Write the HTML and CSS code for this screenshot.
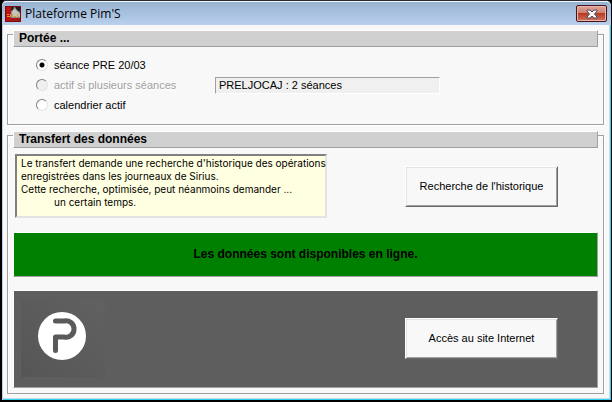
FILE: index.html
```html
<!DOCTYPE html>
<html lang="fr">
<head>
<meta charset="utf-8">
<title>Plateforme Pim'S</title>
<link rel="stylesheet" href="styles.css">
</head>
<body>
<div class="window">
  <header class="titlebar">
    <svg class="app-icon" viewBox="0 0 16 16" aria-hidden="true">
      <rect width="16" height="16" fill="#7c0a10"/>
      <rect x="1" y="1" width="5" height="14" fill="#c01010"/>
      <rect x="6" y="1" width="9" height="11" fill="#8c8c88"/>
      <path d="M6 1h3l-1 3-2 1z" fill="#222"/>
      <path d="M8 4l2-1 2 2 3 3v3H7V6z" fill="#c4c4c0"/>
      <path d="M10 1h5v5l-3-2z" fill="#1c1c1c"/>
      <path d="M6 12h9v3H6z" fill="#a01818"/>
      <path d="M2 8.500h2M2 10.500h3M5.500 8v3M7.500 8v3M9 10.500h2M12.500 8v2.500h2" stroke="#d89a28" fill="none"/>
    </svg>
    <h1 class="title">Plateforme Pim'S</h1>
    <button class="close" type="button" aria-label="Fermer">
      <svg viewBox="0 0 12 10" aria-hidden="true">
        <path d="M1 1h3l2 2 2-2h3v1L8.500 5 11 8v1H8L6 7 4 9H1V8l2.500-3L1 2z" fill="#f6f6f6" stroke="#4a5060" stroke-width="1"/>
      </svg>
    </button>
  </header>
  <main class="content">
    <section class="group">
      <h2 class="group-title">Portée ...</h2>
      <div class="options">
        <label class="option"><input type="radio" name="portee" checked>séance PRE 20/03</label>
        <label class="option off"><input type="radio" name="portee" disabled>actif si plusieurs séances</label>
        <input class="field" type="text" value="PRELJOCAJ : 2 séances" aria-label="Séances" readonly>
        <label class="option"><input type="radio" name="portee">calendrier actif</label>
      </div>
    </section>
    <section class="group transfer">
      <h2 class="group-title">Transfert des données</h2>
      <div class="row">
        <div class="note">
          <p>Le transfert demande une recherche d'historique des opérations</p>
          <p>enregistrées dans les journeaux de Sirius.</p>
          <p>Cette recherche, optimisée, peut néanmoins demander ...</p>
          <p class="indent">un certain temps.</p>
        </div>
        <button class="push" type="button">Recherche de l'historique</button>
      </div>
      <div class="status">Les données sont disponibles en ligne.</div>
      <div class="row banner">
        <svg class="logo" viewBox="0 0 84 78" role="img" aria-label="Pim'S">
          <defs>
            <linearGradient id="shade" x1="0" y1="1" x2="1" y2="0">
              <stop offset="0" stop-color="#565656"/>
              <stop offset="1" stop-color="#616161"/>
            </linearGradient>
          </defs>
          <rect width="84" height="78" fill="url(#shade)"/>
          <circle cx="41" cy="37" r="24" fill="#fff"/>
          <path d="M34.500 22H43a8 8 0 0 1 10 8a8 8 0 0 1-10 8H34.500V51.500" fill="none" stroke="#5a5a5a" stroke-width="5" stroke-linecap="round" stroke-linejoin="round"/>
        </svg>
        <button class="push" type="button">Accès au site Internet</button>
      </div>
    </section>
  </main>
</div>
</body>
</html>
```
FILE: styles.css
```css
* { box-sizing: border-box; }
body {
  margin: 0;
  background: #000;
  color: #000;
  font: 11px/13px "Liberation Sans", Arial, sans-serif;
}
h1, h2, p { margin: 0; }
button, input { font: inherit; color: inherit; }

.window {
  display: flex;
  flex-direction: column;
  min-height: 100vh;
  border: solid;
  border-width: 1px 1px 2px 2px;
  border-color: #2a2a35 #000 #000 #000;
  border-radius: 6px 6px 0 0;
  background: #f8f8f8;
  box-shadow: inset 1px 0 #b9d1ea, inset -1px 0 #2fd0ee, inset 0 -1px #2fd0ee, inset -2px -2px #c4dcea;
}
.titlebar {
  display: flex;
  align-items: center;
  height: 24px;
  padding: 0 4px 0 3px;
  border-top: 1px solid #f4f8fc;
  border-radius: 5px 5px 0 0;
  background: linear-gradient(#98b3d1, #b9d0ec);
}
.app-icon { width: 16px; height: 16px; }
.title {
  flex: 1;
  padding-left: 4px;
  font: 12px/16px "Open Sans", "Noto Sans", sans-serif;
}
.close {
  display: grid;
  place-items: center;
  width: 31px;
  height: 17px;
  padding: 0;
  border: 1px solid #43141c;
  border-radius: 2px;
  background: linear-gradient(#e0a498, #d08070 45%, #b83a22 50%, #cc7560);
  box-shadow: inset 0 0 0 1px #e9b5aa;
}
.close svg { width: 12px; height: 10px; }

.content { padding: 9px 7px 4px 5px; }
.group {
  padding: 0 5px;
  border: 1px solid #a0a0a0;
  box-shadow: 1px 1px #fff, inset 1px 1px #fff;
}
.transfer { margin-top: 10px; padding-bottom: 5px; }
.group-title {
  height: 17px;
  margin-top: -5px;
  padding-left: 5px;
  border: 1px solid;
  border-color: #fff #a0a0a0 #a0a0a0 #fff;
  background: #d0d0d0;
  font: bold 12px/15px "Liberation Sans", Arial, sans-serif;
}
.options {
  display: grid;
  grid-template-columns: 179px 225px;
  grid-auto-rows: 20px;
  align-items: center;
  padding: 8px 0 9px 23px;
}
.option {
  display: flex;
  align-items: center;
  gap: 6px;
  grid-column: 1;
}
.option input {
  appearance: none;
  width: 12px;
  height: 12px;
  margin: 0;
  border: 1px solid;
  border-color: #808080 #e4e4e4 #e4e4e4 #808080;
  border-radius: 50%;
  background: #fff;
}
.option input:checked { background: radial-gradient(circle, #000 2px, #fff 3px); }
.off { color: #a0a0a0; text-shadow: 1px 1px #fff; }
.off input { background: #f0f0f0; }
.field {
  width: 100%;
  height: 17px;
  padding: 0 3px;
  border: 1px solid;
  border-color: #a0a0a0 #fff #fff #a0a0a0;
  border-radius: 0;
  background: #f0f0f0;
}
.row {
  display: flex;
  align-items: center;
  justify-content: space-between;
  padding: 6px 40px 0 2px;
}
.note {
  width: 312px;
  height: 64px;
  padding: 1px 4px;
  border: 2px solid;
  border-color: #808080 #e3e3e3 #e3e3e3 #808080;
  background: #ffffe1;
  font-family: Inter, "Liberation Sans", sans-serif;
  font-size: 10px;
  white-space: nowrap;
}
.indent { padding-left: 33px; }
.push {
  width: 153px;
  height: 41px;
  padding: 0;
  border: 1px solid;
  border-color: #fff #696969 #696969 #fff;
  background: #f8f8f8;
  box-shadow: inset 1px 1px #e3e3e3, inset -1px -1px #a0a0a0;
}
.status, .banner {
  border: 1px solid;
  border-color: #fff #a0a0a0 #a0a0a0 #fff;
}
.status {
  height: 45px;
  margin-top: 14px;
  background: #008000;
  font: bold 12px/43px "Liberation Sans", Arial, sans-serif;
  text-align: center;
}
.banner {
  height: 98px;
  margin-top: 13px;
  padding: 0 39px 2px 7px;
  background: #5e5e5e;
}
.logo { width: 84px; height: 78px; }
```
